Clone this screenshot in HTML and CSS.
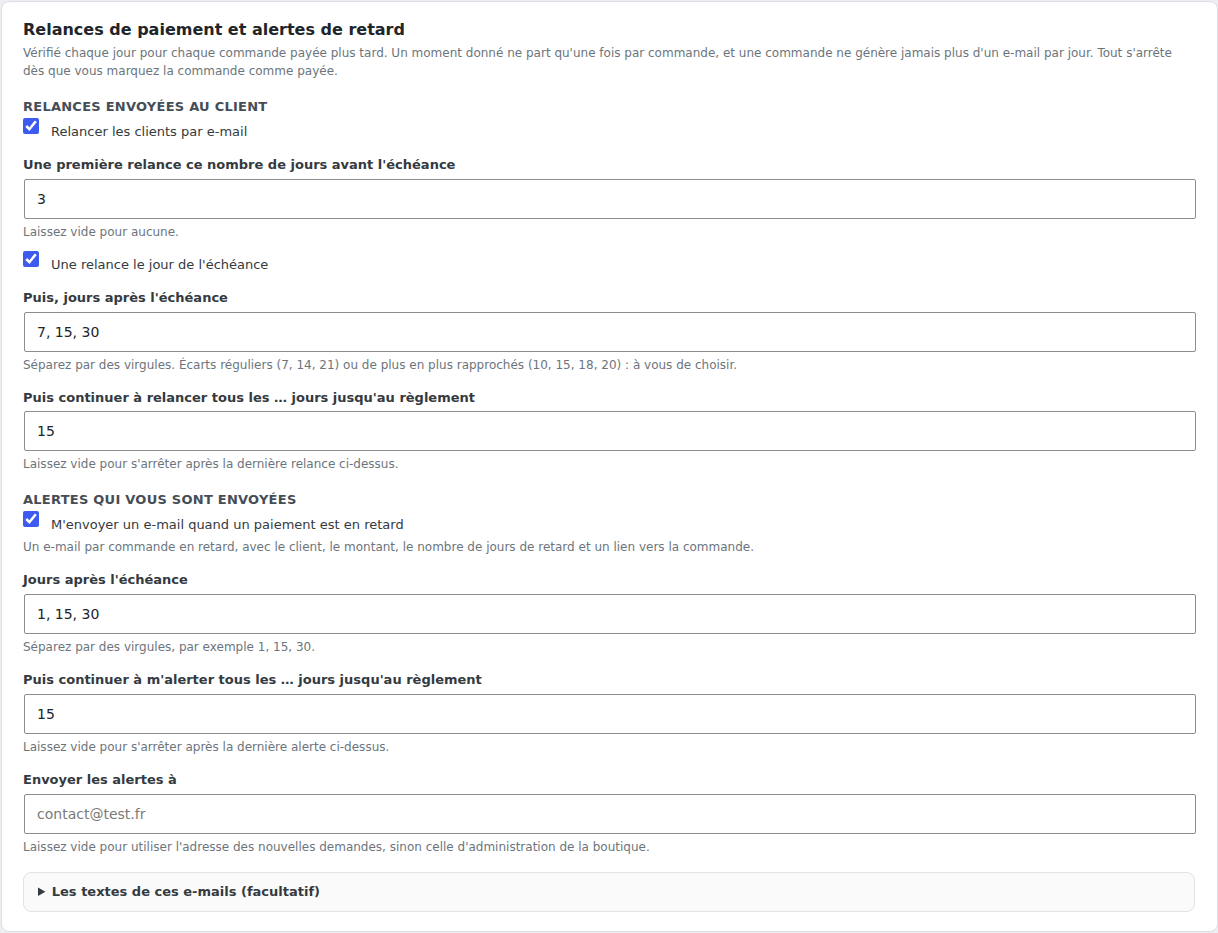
FILE: index.html
```html
<!DOCTYPE html>
<html lang="fr">
<head>
<meta charset="utf-8">
<title>Relances de paiement</title>
<link rel="stylesheet" href="styles.css">
</head>
<body>
<div class="card">
  <h2 class="title">Relances de paiement et alertes de retard</h2>
  <p class="desc">Vérifié chaque jour pour chaque commande payée plus tard. Un moment donné ne part qu'une fois par commande, et une commande ne génère jamais plus d'un e-mail par jour. Tout s'arrête dès que vous marquez la commande comme payée.</p>

  <div class="section">Relances envoyées au client</div>
  <label class="check after-section"><input type="checkbox" checked><span>Relancer les clients par e-mail</span></label>

  <div class="field">
    <label class="label">Une première relance ce nombre de jours avant l'échéance</label>
    <input class="input" type="text" value="3">
    <div class="help">Laissez vide pour aucune.</div>
  </div>

  <label class="check after-field"><input type="checkbox" checked><span>Une relance le jour de l'échéance</span></label>

  <div class="field">
    <label class="label">Puis, jours après l'échéance</label>
    <input class="input" type="text" value="7, 15, 30">
    <div class="help">Séparez par des virgules. Écarts réguliers (7, 14, 21) ou de plus en plus rapprochés (10, 15, 18, 20) : à vous de choisir.</div>
  </div>

  <div class="field">
    <label class="label">Puis continuer à relancer tous les … jours jusqu'au règlement</label>
    <input class="input" type="text" value="15">
    <div class="help">Laissez vide pour s'arrêter après la dernière relance ci-dessus.</div>
  </div>

  <div class="section">Alertes qui vous sont envoyées</div>
  <label class="check after-section"><input type="checkbox" checked><span>M'envoyer un e-mail quand un paiement est en retard</span></label>
  <div class="help help-check">Un e-mail par commande en retard, avec le client, le montant, le nombre de jours de retard et un lien vers la commande.</div>

  <div class="field">
    <label class="label">Jours après l'échéance</label>
    <input class="input" type="text" value="1, 15, 30">
    <div class="help">Séparez par des virgules, par exemple 1, 15, 30.</div>
  </div>

  <div class="field">
    <label class="label">Puis continuer à m'alerter tous les … jours jusqu'au règlement</label>
    <input class="input" type="text" value="15">
    <div class="help">Laissez vide pour s'arrêter après la dernière alerte ci-dessus.</div>
  </div>

  <div class="field">
    <label class="label">Envoyer les alertes à</label>
    <input class="input" type="email" placeholder="contact@test.fr">
    <div class="help">Laissez vide pour utiliser l'adresse des nouvelles demandes, sinon celle d'administration de la boutique.</div>
  </div>

  <details class="texts">
    <summary>Les textes de ces e-mails (facultatif)</summary>
  </details>
</div>
</body>
</html>
```

FILE: styles.css
```css
html, body {
  margin: 0;
  padding: 0;
  background: #eceef1;
}
body {
  font-family: "DejaVu Sans", "Liberation Sans", sans-serif;
  color: #212529;
}
.card {
  box-sizing: border-box;
  width: 1217px;
  height: 931px;
  margin: 1px 0 0 1px;
  background: #ffffff;
  border: 1px solid #dcdfe4;
  border-radius: 8px;
  padding: 17px 21px 20px 21px;
  display: flex;
  flex-direction: column;
}
.title {
  margin: 0;
  font-size: 16px;
  line-height: 22px;
  font-weight: bold;
  color: #212529;
}
.desc {
  margin: 3px 0 0 0;
  font-size: 12px;
  line-height: 18px;
  color: #6c757d;
}
.section {
  margin-top: 18px;
  font-size: 13px;
  line-height: 18px;
  font-weight: bold;
  text-transform: uppercase;
  letter-spacing: 0.25px;
  color: #454d56;
}
.check {
  display: flex;
  align-items: flex-start;
  font-size: 13px;
  line-height: 18px;
  color: #343a40;
}
.check input {
  width: 16px;
  height: 16px;
  margin: 0;
  accent-color: #3d5af1;
  flex: none;
}
.check span {
  margin-left: 12px;
  padding-top: 5px;
}
.after-section { margin-top: 2px; }
.after-field { margin-top: 10px; }
.field {
  margin-top: 15px;
  display: flex;
  flex-direction: column;
}
.label {
  font-size: 13px;
  line-height: 18px;
  font-weight: bold;
  color: #343a40;
  margin-bottom: 4.75px;
}
.input {
  box-sizing: border-box;
  height: 40px;
  width: 1172px;
  margin-left: 1px;
  border: 1px solid #8d8d8d;
  border-radius: 2px;
  padding: 0 12px;
  font-family: "DejaVu Sans", "Liberation Sans", sans-serif;
  font-size: 14px;
  color: #212529;
  background: #fff;
}
.input::placeholder {
  color: #7a7a7a;
}
.help {
  margin-top: 4px;
  font-size: 12px;
  line-height: 18px;
  color: #6c757d;
}
.help-check { margin-top: 4px; }
.texts {
  margin-top: 16px;
  box-sizing: border-box;
  width: 1172px;
  height: 40px;
  border: 1px solid #e1e3e6;
  border-radius: 8px;
  background: #fafafa;
}
.texts summary {
  height: 38px;
  line-height: 38px;
  padding-left: 14px;
  font-size: 13px;
  font-weight: bold;
  color: #343a40;
  cursor: pointer;
}
```
